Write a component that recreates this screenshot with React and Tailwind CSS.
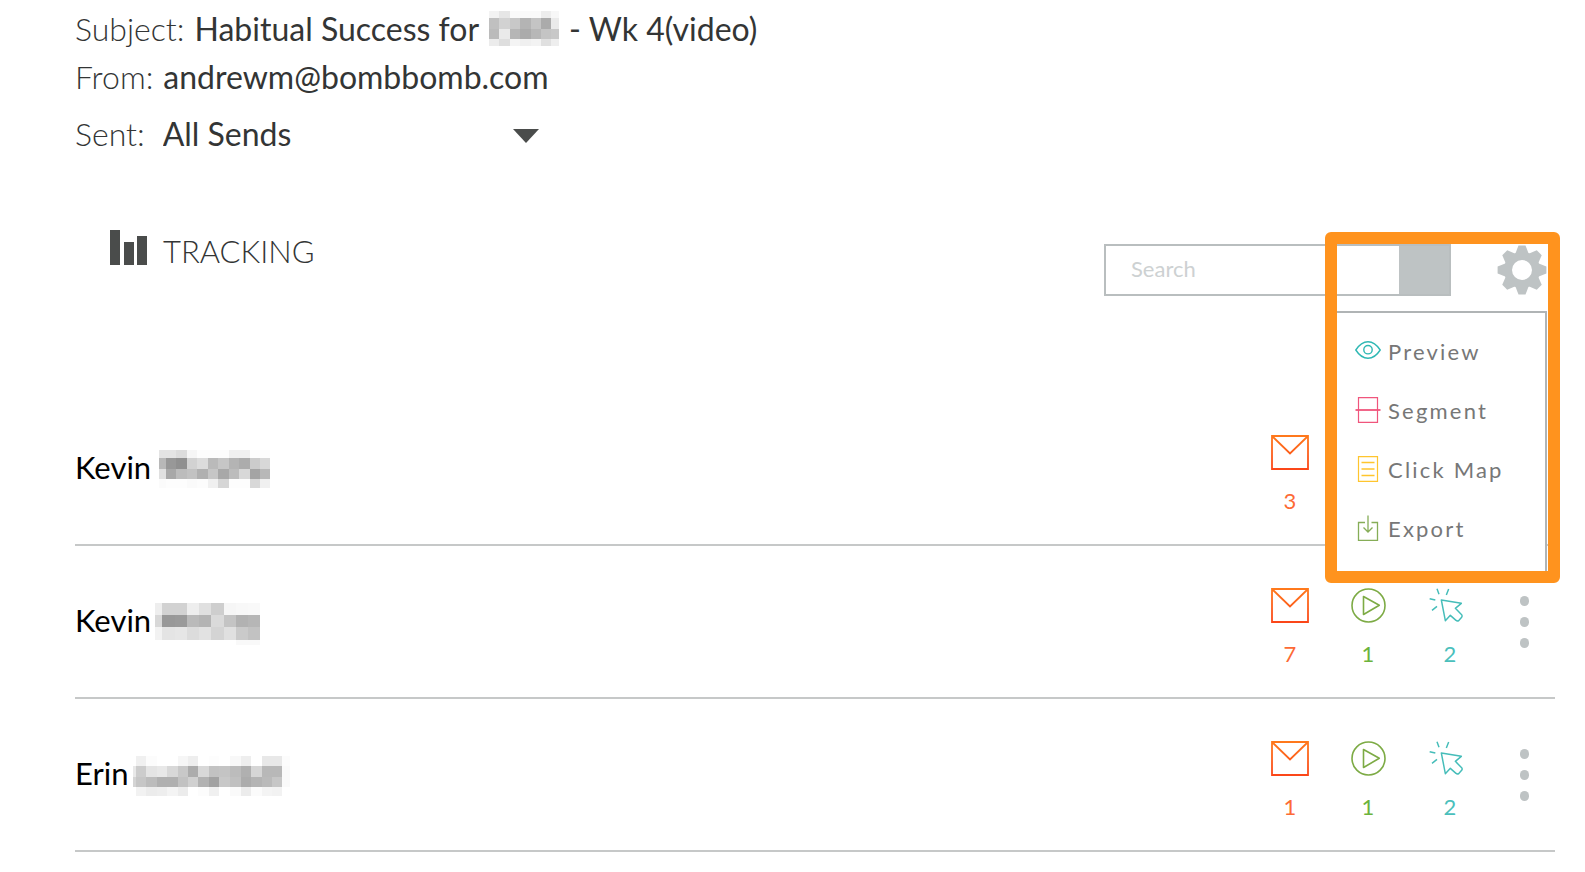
const contacts = [
  {
    id: 1,
    name: 'Kevin',
    opens: 3,
    mask: {
      xs: [0, 4, 11, 21, 32, 42, 53, 63, 74, 84, 95, 105, 115],
      ys: [0, 8, 19, 29, 38],
      cells: [
        'ff e4 e4 dc f6 fd fd fd f0 f0 fd fd',
        'ff b8 98 90 d2 dc ba c6 b4 ac cc d8',
        'ff e0 a8 bc c2 b0 c6 a8 bc d8 a4 b8',
        'ff fb fd fd fa fc f0 d6 fd fd d8 f0',
      ],
    },
  },
  {
    id: 2,
    name: 'Kevin',
    opens: 7,
    plays: 1,
    clicks: 2,
    mask: {
      xs: [0, 7, 20, 32, 44, 56, 69, 81, 93, 105],
      ys: [0, 12, 24, 37, 42],
      cells: [
        'ee d2 d2 ee e0 ce f6 f8 f9',
        'd8 98 9a ba b4 da c4 b2 b6',
        'f2 e4 e6 dc e2 d4 e0 ca c2',
        'ff ff ff ff ff ff ff f9 f9',
      ],
    },
  },
  {
    id: 3,
    name: 'Erin',
    opens: 1,
    plays: 1,
    clicks: 2,
    mask: {
      xs: [0, 3, 13, 24, 34, 45, 55, 65, 76, 86, 97, 108, 118, 129, 139, 149, 157],
      ys: [0, 10, 21, 31, 40],
      cells: [
        'ff f0 fc ff ff f6 ee ff fd ff f8 ee ff e8 e8 fc',
        'e8 cc e4 e8 d8 c8 ac d8 c2 c4 bc b0 d6 b8 b8 fa',
        'd4 c6 bc b0 b0 c2 d0 b2 a2 c8 c0 ac b4 ba c6 fa',
        'ff f2 ec ee f4 ec ff fc f0 ff fa ec fb f4 f2 ff',
      ],
    },
  },
]

const subjectMask = {
  xs: [0, 10, 21, 31, 42, 52, 62, 70],
  ys: [0, 7, 18, 28, 35],
  cells: [
    'f3 e6 fa fa fa ed f7',
    'c0 d2 c8 b4 c4 ab ea',
    'bb ea b6 ab b7 c4 c8',
    'ec de f4 f0 f3 e0 ee',
  ],
}

// Pixelated block that hides private names
function Mosaic({ mask, className }) {
  const { xs, ys, cells } = mask
  return (
    <svg
      width={xs[xs.length - 1]}
      height={ys[ys.length - 1]}
      shapeRendering="crispEdges"
      aria-hidden="true"
      className={className}
    >
      {cells.map((row, r) =>
        row.split(' ').map((g, c) => (
          <rect
            key={`${r}-${c}`}
            x={xs[c]}
            y={ys[r]}
            width={xs[c + 1] - xs[c]}
            height={ys[r + 1] - ys[r]}
            fill={`#${g}${g}${g}`}
          />
        ))
      )}
    </svg>
  )
}

function BarsIcon() {
  return (
    <svg width="37" height="35" viewBox="0 0 37 35" fill="#4a4c4b" aria-hidden="true">
      <rect x="0" y="0" width="10" height="35" />
      <rect x="14" y="12" width="10" height="23" />
      <rect x="27" y="6" width="10" height="29" />
    </svg>
  )
}

function GearIcon() {
  return (
    <svg width="50" height="50" viewBox="-25 -25 50 50" aria-hidden="true">
      <circle r="14" fill="none" stroke="#bec3c4" strokeWidth="8" />
      {[0, 45, 90, 135, 180, 225, 270, 315].map((a) => (
        <path key={a} d="M-7 -15.5L-3.5 -24.4H3.5L7 -15.5Z" fill="#bec3c4" transform={`rotate(${a})`} />
      ))}
    </svg>
  )
}

function MailIcon() {
  return (
    <svg width="38" height="35" viewBox="0 0 38 35" fill="none" aria-hidden="true">
      <defs>
        <linearGradient id="mail" x1="0" y1="0" x2="0" y2="35" gradientUnits="userSpaceOnUse">
          <stop offset="0" stopColor="#ff7a1c" />
          <stop offset="1" stopColor="#fb4519" />
        </linearGradient>
      </defs>
      <path d="M1 1H37V34H1ZM1.5 1.5L19 18.5L36.5 1.5" stroke="url(#mail)" strokeWidth="1.8" />
    </svg>
  )
}

function PlayIcon() {
  return (
    <svg width="35" height="35" viewBox="0 0 35 35" fill="none" stroke="#7dab45" strokeWidth="1.6" strokeLinejoin="round" aria-hidden="true">
      <circle cx="17.5" cy="17.5" r="16.5" />
      <path d="M12.5 8.5V26.5L28.3 17.3Z" />
    </svg>
  )
}

function ClickIcon() {
  return (
    <svg width="42" height="35" viewBox="0 0 126 105" fill="none" stroke="#45bdb9" strokeWidth="4.4" strokeLinejoin="round" aria-hidden="true">
      <path d="M37 36L97 46L79 61L98 80Q101 84 98 88L90 97Q85 101 81 97L64 82L49 98Z" />
      <path d="M2 32L19 36M24 2L30 19M59 3L52 21M24 55L9 67" />
    </svg>
  )
}

function EyeIcon() {
  return (
    <svg width="26" height="26" viewBox="0 0 26 26" fill="none" stroke="#2fb8b4" strokeWidth="1.4" aria-hidden="true">
      <path d="M.8 12C4 7 8.5 3.7 13 3.7S22 7 25.2 12C22 17 17.5 20.3 13 20.3S4 17 .8 12Z" />
      <circle cx="13" cy="11.7" r="4.2" />
    </svg>
  )
}

function SegmentIcon() {
  return (
    <svg width="26" height="26" viewBox="0 0 26 26" fill="none" stroke="#f0557c" aria-hidden="true">
      <path d="M3.5 .7H22.5V25.3H3.5Z" strokeWidth="1.2" />
      <path d="M.5 13H25.5" strokeWidth="1.8" />
    </svg>
  )
}

function ClickMapIcon() {
  return (
    <svg width="26" height="26" viewBox="0 0 26 26" fill="none" stroke="#ffc52e" aria-hidden="true">
      <path d="M3.5 .7H22.5V25.3H3.5Z" strokeWidth="1.2" />
      <path d="M6.5 6.5H19.5M6.5 13H19.5M6.5 19.5H19.5" strokeWidth="1.5" />
    </svg>
  )
}

function ExportIcon() {
  return (
    <svg width="26" height="26" viewBox="0 0 26 26" fill="none" stroke="#86ad57" strokeWidth="1.3" aria-hidden="true">
      <path d="M10 7.5H3.5V25.3H22.5V7.5H16.5" />
      <path d="M13 .5V17M8.5 12.5L13 17L17.5 12.5" />
    </svg>
  )
}

const menuItems = [
  { label: 'Preview', icon: EyeIcon },
  { label: 'Segment', icon: SegmentIcon },
  { label: 'Click Map', icon: ClickMapIcon },
  { label: 'Export', icon: ExportIcon },
]

function Stat({ icon: Icon, value, className }) {
  return (
    <div className={`flex flex-col items-center gap-[19px] text-[22px] leading-6 ${className}`}>
      {value !== undefined && (
        <>
          <Icon />
          <span>{value}</span>
        </>
      )}
    </div>
  )
}

function ContactRow({ contact }) {
  return (
    <li className="flex h-[153px] border-b-2 border-[#c6c8c8]">
      <div className="flex flex-1 items-start gap-1 pt-[50px]">
        <span className="text-[31px] leading-[48px] text-black">{contact.name}</span>
        <Mosaic mask={contact.mask} className="mt-[7px]" />
      </div>
      <div className="flex pt-[42px]">
        <Stat icon={MailIcon} value={contact.opens} className="w-[78px] text-[#fd6a35]" />
        <Stat icon={PlayIcon} value={contact.plays} className="w-[78px] text-[#6cb33c]" />
        <Stat icon={ClickIcon} value={contact.clicks} className="w-[86px] text-[#4abfbc]" />
        <div className="w-[62px]">
          {contact.plays !== undefined && (
            <button aria-label="More" className="flex w-full flex-col items-center gap-[11px] pt-2">
              <span className="h-[10px] w-[9px] rounded-full bg-[#bec3c4]" />
              <span className="h-[10px] w-[9px] rounded-full bg-[#bec3c4]" />
              <span className="h-[10px] w-[9px] rounded-full bg-[#bec3c4]" />
            </button>
          )}
        </div>
      </div>
    </li>
  )
}

export default function App() {
  return (
    <main className="min-h-screen bg-white pt-[5px] pr-[30px] pl-[75px] font-['Lato',sans-serif] text-[#333535]">
      {/* Email details */}
      <header className="text-[32px] leading-[48px]">
        <p className="flex gap-[10px]">
          <span className="font-light">Subject:</span>
          <span>Habitual Success for</span>
          <Mosaic mask={subjectMask} className="mt-[6px]" />
          <span>- Wk 4(video)</span>
        </p>
        <p className="flex gap-[10px]">
          <span className="font-light">From:</span>
          <span>andrewm@bombbomb.com</span>
        </p>
        <div className="mt-[9px] flex gap-[18px]">
          <label htmlFor="sends" className="font-light">Sent:</label>
          <div className="relative">
            <select id="sends" className="h-12 w-[380px] appearance-none bg-transparent">
              <option>All Sends</option>
            </select>
            <svg width="26" height="14" viewBox="0 0 26 14" className="pointer-events-none absolute top-[19px] right-1" aria-hidden="true">
              <path d="M0 0H26L13 14Z" fill="#4a4c4b" />
            </svg>
          </div>
        </div>
      </header>

      {/* Tracking toolbar */}
      <section className="mt-[72px] flex h-[163px] items-start justify-between pr-2 pl-[35px]">
        <h1 className="flex gap-4 text-[31px] font-light">
          <BarsIcon />
          <span className="leading-[42px]">TRACKING</span>
        </h1>

        <div className="relative mt-[14px] flex items-center gap-[46px]">
          <form className="flex h-[52px] w-[347px] border-2 border-[#b9bebf]">
            <input
              type="text"
              aria-label="Search"
              placeholder="Search"
              className="min-w-0 flex-1 px-[25px] pb-1 text-[22px] outline-none placeholder:text-[#cdd1d2]"
            />
            <button type="button" aria-label="Search" className="w-[50px] bg-[#bec3c4]" />
          </form>
          <button aria-label="Settings">
            <GearIcon />
          </button>

          <ul className="absolute top-[67px] right-0 flex h-[264px] w-[218px] flex-col gap-[23px] border-2 border-[#b0b4b5] bg-white pt-[20px] pl-[24px]">
            {menuItems.map(({ label, icon: Icon }) => (
              <li key={label}>
                <button className="flex h-9 items-center gap-[7px] text-[22px] tracking-widest text-[#777]">
                  <Icon />
                  <span>{label}</span>
                </button>
              </li>
            ))}
          </ul>

          {/* Callout frame */}
          <div className="pointer-events-none absolute -top-3 -right-[13px] h-[351px] w-[235px] rounded-md border-12 border-[#ff931e]" />
        </div>
      </section>

      <ul>
        {contacts.map((contact) => (
          <ContactRow key={contact.id} contact={contact} />
        ))}
      </ul>
    </main>
  )
}
